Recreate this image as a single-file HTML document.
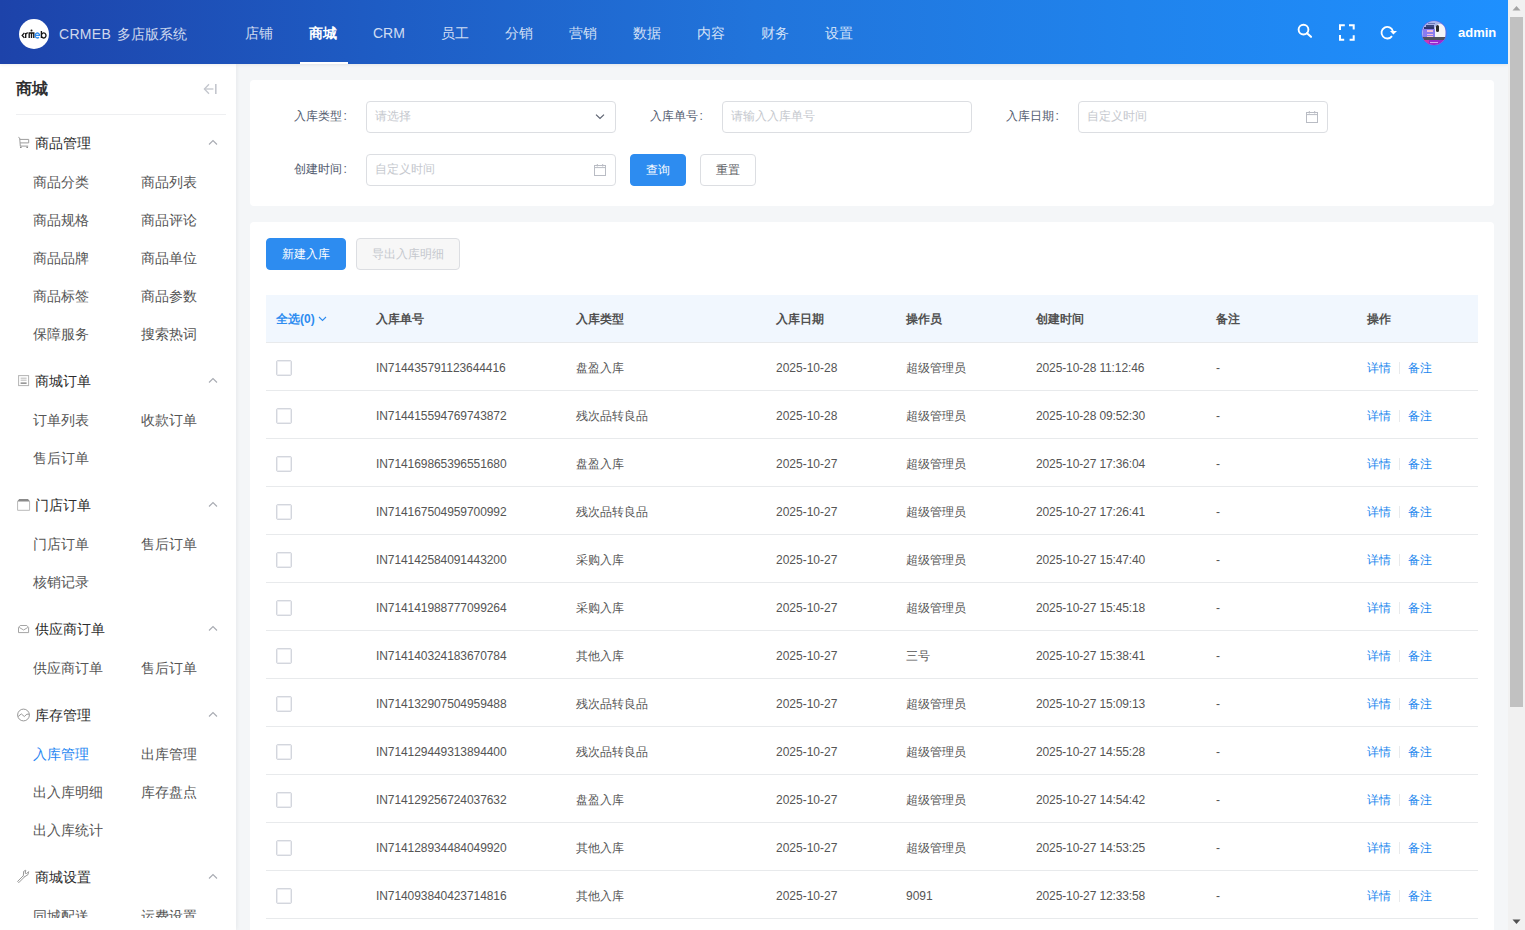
<!DOCTYPE html><html><head><meta charset="utf-8"><style>
*{box-sizing:border-box;margin:0;padding:0}
html,body{width:1525px;height:930px;overflow:hidden;background:#f4f6f8;font-family:"Liberation Sans",sans-serif;}
.a{position:absolute;white-space:nowrap}
#hdr{position:absolute;left:0;top:0;width:1508px;height:64px;background:linear-gradient(90deg,#1d43aa 0%,#1e5cc4 25%,#2174db 50%,#2083ec 75%,#1e90ff 100%);z-index:3;box-shadow:0 1px 3px rgba(0,21,41,.08)}
.logo{position:absolute;left:19px;top:19px;width:30px;height:30px;border-radius:50%;background:#fff;}
.brand{left:59px;top:25px;font-size:14px;line-height:18px;color:rgba(255,255,255,.8)}
.nav{top:24px;font-size:14px;line-height:18px;color:rgba(255,255,255,.8)}
.nav.on{color:#fff;font-weight:bold}
.uline{position:absolute;left:300px;top:62px;width:48px;height:2px;background:#fff}
#side{position:absolute;left:0;top:64px;width:236px;height:866px;background:#fff;box-shadow:1px 0 4px rgba(0,21,41,.06);z-index:2}
#menu{position:absolute;left:0;top:0;width:236px;height:854px;overflow:hidden}
.st{left:16px;top:15px;font-size:16px;line-height:20px;font-weight:bold;color:#303133}
.div{position:absolute;left:16px;top:50px;width:210px;height:1px;background:#eeeff1}
.gt{font-size:14px;line-height:18px;color:#2b2b2b}
.it{font-size:14px;line-height:18px;color:#555}
.it.on{color:#1f87f2}
.card{position:absolute;background:#fff;border-radius:4px}
.lbl{font-size:12px;line-height:16px;color:#515a6e}
.inp{position:absolute;height:32px;border:1px solid #dcdee2;border-radius:4px;background:#fff}
.ph{font-size:12px;line-height:16px;color:#c5c8ce}
.btn{position:absolute;height:32px;border-radius:4px;font-size:12px;text-align:center;line-height:30px}
.th{font-size:12px;line-height:16px;color:#505050;font-weight:bold}
.td{font-size:12px;line-height:16px;color:#555}
.lk{font-size:12px;line-height:16px;color:#2086ee}
.cb{position:absolute;width:16px;height:16px;border:1px solid #d3d6dd;border-radius:2px;background:#fff;box-shadow:inset 0 0 0 1px rgba(220,223,230,.55)}
.hl{position:absolute;height:1px;background:#e8eaec}
svg{overflow:visible}
</style></head><body>
<div id="hdr">
<div class="logo"><svg width="30" height="30" viewBox="0 0 30 30" style="position:absolute;left:0;top:0"><g fill="none" stroke="#151515" stroke-width="1.35"><path d="M5.4 13.9 L3.2 16.4 L5.4 18.9"/><path d="M6.7 19 V14 M6.7 15.4 Q7.3 13.9 8.9 13.9"/><path d="M10.2 19 V14 H14.8 V19 M12.5 14 V19"/><path d="M22.4 12 V19 M22.4 16.4 A2.3 2.5 0 1 1 22.4 16.5"/></g><circle cx="12.5" cy="11.6" r="1" fill="#151515"/><path d="M16.1 16.3 H20.6 A2.25 2.5 0 1 0 19.9 18.3" fill="none" stroke="#2d8cf0" stroke-width="1.35"/></svg></div>
<div class="a brand"><span style="letter-spacing:0.3px">CRMEB</span><span style="display:inline-block;width:6px"></span>多店版系统</div>
<div class="a nav" style="left:245px">店铺</div>
<div class="a nav on" style="left:309px">商城</div>
<div class="a nav" style="left:373px">CRM</div>
<div class="a nav" style="left:441px">员工</div>
<div class="a nav" style="left:505px">分销</div>
<div class="a nav" style="left:569px">营销</div>
<div class="a nav" style="left:633px">数据</div>
<div class="a nav" style="left:697px">内容</div>
<div class="a nav" style="left:761px">财务</div>
<div class="a nav" style="left:825px">设置</div>
<div class="uline"></div>
<svg width="20" height="20" viewBox="0 0 20 20" style="position:absolute;left:1294px;top:20px"><circle cx="9.5" cy="9.6" r="4.9" fill="none" stroke="#fff" stroke-width="1.9"/><path d="M13 13.2 L17 16.8" stroke="#fff" stroke-width="2.1" stroke-linecap="round"/></svg>
<svg width="20" height="20" viewBox="0 0 20 20" style="position:absolute;left:1337px;top:22px"><g fill="none" stroke="#fff" stroke-width="2"><path d="M3 8 V3.3 H7.8"/><path d="M12 3.3 H16.7 V7.5"/><path d="M3 13 V17.7 H7.2"/><path d="M12.6 17.7 H16.7 V13.2"/></g></svg>
<svg width="20" height="20" viewBox="0 0 20 20" style="position:absolute;left:1377px;top:22px"><path d="M15.9 9.2 A5.8 5.8 0 1 0 15.0 14.1" fill="none" stroke="#fff" stroke-width="1.8"/><path d="M13.0 9.0 L20.0 9.0 L16.4 12.6 Z" fill="#fff"/></svg>
<div class="a" style="left:1422px;top:21px;width:24px;height:24px;border-radius:50%;overflow:hidden;background:#aab6ea;box-shadow:0 0 0 0.6px rgba(160,60,220,.5)"><div class="a" style="left:6px;top:1.5px;width:7px;height:1px;background:#6c78b8"></div><div class="a" style="left:4px;top:4.3px;width:8px;height:1.3px;background:#3a4580"></div><div class="a" style="left:2px;top:6.2px;width:10px;height:1.8px;background:#2e3670"></div><div class="a" style="left:1px;top:8.2px;width:12px;height:8.5px;background:#8a7cf0"></div><div class="a" style="left:4.5px;top:9.4px;width:6px;height:1.4px;background:#f2bcd8"></div><div class="a" style="left:4.5px;top:12.5px;width:6px;height:1.4px;background:#f2bcd8"></div><div class="a" style="left:4.5px;top:15.1px;width:6px;height:1.4px;background:#f2bcd8"></div><div class="a" style="left:12.5px;top:3px;width:10px;height:13.5px;border-radius:5px 5px 0 0;background:#f4f4f7"></div><div class="a" style="left:13.6px;top:4px;width:3.8px;height:6.5px;border-radius:2px;background:#2a2a2a"></div><div class="a" style="left:0;top:16.3px;width:24px;height:2.4px;background:#50505c"></div><div class="a" style="left:0;top:18.7px;width:24px;height:6px;background:#9a28d0"></div><div class="a" style="left:0;top:18.7px;width:7px;height:6px;background:#cc38b0"></div><div class="a" style="left:8px;top:21px;width:8px;height:1.2px;background:#d9a6f0"></div></div>
<div class="a" style="left:1458px;top:24px;font-size:13px;line-height:18px;color:#fff;font-weight:bold">admin</div>
</div>
<div id="side"><div id="menu">
<div class="a st">商城</div>
<svg width="16" height="14" viewBox="0 0 16 14" style="position:absolute;left:203px;top:19px"><g fill="none" stroke="#c3c6cd" stroke-width="1.3"><path d="M1.5 6 H10.4"/><path d="M6 1.2 L1.4 6 L6 10.8"/></g><rect x="12" y="1" width="1.6" height="10" fill="#c3c6cd"/></svg>
<div class="div"></div>
<div class="a gt" style="left:35px;top:70px">商品管理</div>
<svg width="14" height="14" viewBox="0 0 14 14" style="position:absolute;left:18px;top:73px"><g fill="none" stroke="#9d9d9d" stroke-width="1"><path d="M0.4 0.3 L1.7 1.0 L2.3 9.2"/><path d="M1.8 2.4 H10.7 V5.9 H2.1"/><path d="M2.3 9.1 H10.2"/></g><g fill="#8a8a8a"><rect x="2" y="9.7" width="1.6" height="1.3"/><rect x="8.4" y="9.7" width="1.6" height="1.3"/></g></svg>
<svg width="10" height="7" viewBox="0 0 10 7" style="position:absolute;left:208px;top:75px"><path d="M1 5.5 L5 1.5 L9 5.5" fill="none" stroke="#a8abb2" stroke-width="1.1"/></svg>
<div class="a it" style="left:33px;top:109px">商品分类</div>
<div class="a it" style="left:141px;top:109px">商品列表</div>
<div class="a it" style="left:33px;top:147px">商品规格</div>
<div class="a it" style="left:141px;top:147px">商品评论</div>
<div class="a it" style="left:33px;top:185px">商品品牌</div>
<div class="a it" style="left:141px;top:185px">商品单位</div>
<div class="a it" style="left:33px;top:223px">商品标签</div>
<div class="a it" style="left:141px;top:223px">商品参数</div>
<div class="a it" style="left:33px;top:261px">保障服务</div>
<div class="a it" style="left:141px;top:261px">搜索热词</div>
<div class="a gt" style="left:35px;top:308px">商城订单</div>
<svg width="12" height="12" viewBox="0 0 12 12" style="position:absolute;left:18px;top:311px"><rect x="0.6" y="0.6" width="10" height="10" fill="none" stroke="#b4b4b4" stroke-width="1"/><g fill="#b0b0b0"><rect x="2.6" y="2.7" width="6" height="0.9"/><rect x="2.6" y="4.7" width="6" height="0.9"/></g><rect x="2.6" y="7.6" width="6" height="1" fill="#555"/></svg>
<svg width="10" height="7" viewBox="0 0 10 7" style="position:absolute;left:208px;top:313px"><path d="M1 5.5 L5 1.5 L9 5.5" fill="none" stroke="#a8abb2" stroke-width="1.1"/></svg>
<div class="a it" style="left:33px;top:347px">订单列表</div>
<div class="a it" style="left:141px;top:347px">收款订单</div>
<div class="a it" style="left:33px;top:385px">售后订单</div>
<div class="a gt" style="left:35px;top:432px">门店订单</div>
<svg width="14" height="13" viewBox="0 0 14 13" style="position:absolute;left:17px;top:435px"><path d="M0.6 2.5 V11.3 H12.6 V2.5" fill="none" stroke="#b9b9b9" stroke-width="1"/><path d="M2.2 0 H11 L13.1 2.6 H0.1 Z" fill="#8a8a8a"/></svg>
<svg width="10" height="7" viewBox="0 0 10 7" style="position:absolute;left:208px;top:437px"><path d="M1 5.5 L5 1.5 L9 5.5" fill="none" stroke="#a8abb2" stroke-width="1.1"/></svg>
<div class="a it" style="left:33px;top:471px">门店订单</div>
<div class="a it" style="left:141px;top:471px">售后订单</div>
<div class="a it" style="left:33px;top:509px">核销记录</div>
<div class="a gt" style="left:35px;top:556px">供应商订单</div>
<svg width="13" height="10" viewBox="0 0 13 10" style="position:absolute;left:18px;top:561px"><g fill="none" stroke="#a5a5a5" stroke-width="1"><path d="M2.2 0.5 H8.8 L10.6 2.4 V7.6 H0.5 V2.4 Z"/><path d="M1.2 2.4 L5.6 5.0 L9.9 2.4"/></g></svg>
<svg width="10" height="7" viewBox="0 0 10 7" style="position:absolute;left:208px;top:561px"><path d="M1 5.5 L5 1.5 L9 5.5" fill="none" stroke="#a8abb2" stroke-width="1.1"/></svg>
<div class="a it" style="left:33px;top:595px">供应商订单</div>
<div class="a it" style="left:141px;top:595px">售后订单</div>
<div class="a gt" style="left:35px;top:642px">库存管理</div>
<svg width="16" height="16" viewBox="0 0 16 16" style="position:absolute;left:16px;top:643px"><g fill="none" stroke="#999" stroke-width="1"><circle cx="7.5" cy="8" r="5.9"/><path d="M2.2 9.5 L5.3 6.9 L8.3 9.5 L10.9 7.2 L13.2 7.2"/></g></svg>
<svg width="10" height="7" viewBox="0 0 10 7" style="position:absolute;left:208px;top:647px"><path d="M1 5.5 L5 1.5 L9 5.5" fill="none" stroke="#a8abb2" stroke-width="1.1"/></svg>
<div class="a it on" style="left:33px;top:681px">入库管理</div>
<div class="a it" style="left:141px;top:681px">出库管理</div>
<div class="a it" style="left:33px;top:719px">出入库明细</div>
<div class="a it" style="left:141px;top:719px">库存盘点</div>
<div class="a it" style="left:33px;top:757px">出入库统计</div>
<div class="a gt" style="left:35px;top:804px">商城设置</div>
<svg width="16" height="16" viewBox="0 0 16 16" style="position:absolute;left:16px;top:804px"><g fill="none" stroke="#9a9a9a" stroke-width="1" stroke-linejoin="round"><path d="M1.6 13.4 L2.8 14.6 L8.6 8.8 L7.4 7.6 Z"/><path d="M7.4 7.6 L7.6 3.4 L9.8 2.2 L9.2 5.3 L10.6 5.6 L12.6 3.6 L12 6.6 L8.6 8.8"/></g></svg>
<svg width="10" height="7" viewBox="0 0 10 7" style="position:absolute;left:208px;top:809px"><path d="M1 5.5 L5 1.5 L9 5.5" fill="none" stroke="#a8abb2" stroke-width="1.1"/></svg>
<div class="a it" style="left:33px;top:843px">同城配送</div>
<div class="a it" style="left:141px;top:843px">运费设置</div>
</div></div>
<div class="card" style="left:250px;top:80px;width:1244px;height:126px"></div>
<div class="card" style="left:250px;top:222px;width:1244px;height:708px;border-radius:4px 4px 0 0"></div>
<div class="a lbl" style="left:294px;top:108px">入库类型<span style="margin-left:1.5px">:</span></div>
<div class="inp" style="left:366px;top:101px;width:250px"></div>
<div class="a ph" style="left:375px;top:108px">请选择</div>
<svg width="12" height="8" viewBox="0 0 12 8" style="position:absolute;left:594px;top:113px"><path d="M2 1.6 L6 5.5 L10 1.6" fill="none" stroke="#5c6270" stroke-width="1.2"/></svg>
<div class="a lbl" style="left:650px;top:108px">入库单号<span style="margin-left:1.5px">:</span></div>
<div class="inp" style="left:722px;top:101px;width:250px"></div>
<div class="a ph" style="left:731px;top:108px">请输入入库单号</div>
<div class="a lbl" style="left:1006px;top:108px">入库日期<span style="margin-left:1.5px">:</span></div>
<div class="inp" style="left:1078px;top:101px;width:250px"></div>
<div class="a ph" style="left:1087px;top:108px">自定义时间</div>
<svg width="14" height="14" viewBox="0 0 14 14" style="position:absolute;left:1305px;top:110px"><g fill="none" stroke="#b9bcc4" stroke-width="1"><rect x="1.5" y="2.5" width="11" height="10"/><path d="M1.5 4.6 H12.5"/><path d="M4.3 1 V3.5 M9.7 1 V3.5"/></g></svg>
<div class="a lbl" style="left:294px;top:161px">创建时间<span style="margin-left:1.5px">:</span></div>
<div class="inp" style="left:366px;top:154px;width:250px"></div>
<div class="a ph" style="left:375px;top:161px">自定义时间</div>
<svg width="14" height="14" viewBox="0 0 14 14" style="position:absolute;left:593px;top:163px"><g fill="none" stroke="#b9bcc4" stroke-width="1"><rect x="1.5" y="2.5" width="11" height="10"/><path d="M1.5 4.6 H12.5"/><path d="M4.3 1 V3.5 M9.7 1 V3.5"/></g></svg>
<div class="btn" style="left:630px;top:154px;width:56px;background:#2d8cf0;color:#fff;border:1px solid #2d8cf0">查询</div>
<div class="btn" style="left:700px;top:154px;width:56px;background:#fff;color:#606266;border:1px solid #dcdee2">重置</div>
<div class="btn" style="left:266px;top:238px;width:80px;background:#2d8cf0;color:#fff;border:1px solid #2d8cf0">新建入库</div>
<div class="btn" style="left:356px;top:238px;width:104px;background:#f7f7f7;color:#c5c8ce;border:1px solid #dcdee2">导出入库明细</div>
<div class="a" style="left:266px;top:295px;width:1212px;height:47px;background:#f1f7fe"></div>
<div class="a th" style="left:276px;top:311px;color:#2d8cf0;font-weight:bold">全选(0)</div>
<svg width="9" height="6" viewBox="0 0 9 6" style="position:absolute;left:318px;top:316px"><path d="M1 1 L4.5 4.5 L8 1" fill="none" stroke="#2d8cf0" stroke-width="1.1"/></svg>
<div class="a th" style="left:376px;top:311px">入库单号</div>
<div class="a th" style="left:576px;top:311px">入库类型</div>
<div class="a th" style="left:776px;top:311px">入库日期</div>
<div class="a th" style="left:906px;top:311px">操作员</div>
<div class="a th" style="left:1036px;top:311px">创建时间</div>
<div class="a th" style="left:1216px;top:311px">备注</div>
<div class="a th" style="left:1367px;top:311px">操作</div>
<div class="hl" style="left:266px;top:342px;width:1212px"></div>
<div class="cb" style="left:276px;top:360px"></div>
<div class="a td" style="left:376px;top:360px;letter-spacing:-0.08px">IN714435791123644416</div>
<div class="a td" style="left:576px;top:360px">盘盈入库</div>
<div class="a td" style="left:776px;top:360px">2025-10-28</div>
<div class="a td" style="left:906px;top:360px">超级管理员</div>
<div class="a td" style="left:1036px;top:360px;letter-spacing:-0.12px">2025-10-28 11:12:46</div>
<div class="a td" style="left:1216px;top:360px">-</div>
<div class="a lk" style="left:1367px;top:360px">详情</div>
<div class="a" style="left:1399px;top:362px;width:1px;height:12px;background:#e8eaec"></div>
<div class="a lk" style="left:1408px;top:360px">备注</div>
<div class="hl" style="left:266px;top:390px;width:1212px"></div>
<div class="cb" style="left:276px;top:408px"></div>
<div class="a td" style="left:376px;top:408px;letter-spacing:-0.08px">IN714415594769743872</div>
<div class="a td" style="left:576px;top:408px">残次品转良品</div>
<div class="a td" style="left:776px;top:408px">2025-10-28</div>
<div class="a td" style="left:906px;top:408px">超级管理员</div>
<div class="a td" style="left:1036px;top:408px;letter-spacing:-0.12px">2025-10-28 09:52:30</div>
<div class="a td" style="left:1216px;top:408px">-</div>
<div class="a lk" style="left:1367px;top:408px">详情</div>
<div class="a" style="left:1399px;top:410px;width:1px;height:12px;background:#e8eaec"></div>
<div class="a lk" style="left:1408px;top:408px">备注</div>
<div class="hl" style="left:266px;top:438px;width:1212px"></div>
<div class="cb" style="left:276px;top:456px"></div>
<div class="a td" style="left:376px;top:456px;letter-spacing:-0.08px">IN714169865396551680</div>
<div class="a td" style="left:576px;top:456px">盘盈入库</div>
<div class="a td" style="left:776px;top:456px">2025-10-27</div>
<div class="a td" style="left:906px;top:456px">超级管理员</div>
<div class="a td" style="left:1036px;top:456px;letter-spacing:-0.12px">2025-10-27 17:36:04</div>
<div class="a td" style="left:1216px;top:456px">-</div>
<div class="a lk" style="left:1367px;top:456px">详情</div>
<div class="a" style="left:1399px;top:458px;width:1px;height:12px;background:#e8eaec"></div>
<div class="a lk" style="left:1408px;top:456px">备注</div>
<div class="hl" style="left:266px;top:486px;width:1212px"></div>
<div class="cb" style="left:276px;top:504px"></div>
<div class="a td" style="left:376px;top:504px;letter-spacing:-0.08px">IN714167504959700992</div>
<div class="a td" style="left:576px;top:504px">残次品转良品</div>
<div class="a td" style="left:776px;top:504px">2025-10-27</div>
<div class="a td" style="left:906px;top:504px">超级管理员</div>
<div class="a td" style="left:1036px;top:504px;letter-spacing:-0.12px">2025-10-27 17:26:41</div>
<div class="a td" style="left:1216px;top:504px">-</div>
<div class="a lk" style="left:1367px;top:504px">详情</div>
<div class="a" style="left:1399px;top:506px;width:1px;height:12px;background:#e8eaec"></div>
<div class="a lk" style="left:1408px;top:504px">备注</div>
<div class="hl" style="left:266px;top:534px;width:1212px"></div>
<div class="cb" style="left:276px;top:552px"></div>
<div class="a td" style="left:376px;top:552px;letter-spacing:-0.08px">IN714142584091443200</div>
<div class="a td" style="left:576px;top:552px">采购入库</div>
<div class="a td" style="left:776px;top:552px">2025-10-27</div>
<div class="a td" style="left:906px;top:552px">超级管理员</div>
<div class="a td" style="left:1036px;top:552px;letter-spacing:-0.12px">2025-10-27 15:47:40</div>
<div class="a td" style="left:1216px;top:552px">-</div>
<div class="a lk" style="left:1367px;top:552px">详情</div>
<div class="a" style="left:1399px;top:554px;width:1px;height:12px;background:#e8eaec"></div>
<div class="a lk" style="left:1408px;top:552px">备注</div>
<div class="hl" style="left:266px;top:582px;width:1212px"></div>
<div class="cb" style="left:276px;top:600px"></div>
<div class="a td" style="left:376px;top:600px;letter-spacing:-0.08px">IN714141988777099264</div>
<div class="a td" style="left:576px;top:600px">采购入库</div>
<div class="a td" style="left:776px;top:600px">2025-10-27</div>
<div class="a td" style="left:906px;top:600px">超级管理员</div>
<div class="a td" style="left:1036px;top:600px;letter-spacing:-0.12px">2025-10-27 15:45:18</div>
<div class="a td" style="left:1216px;top:600px">-</div>
<div class="a lk" style="left:1367px;top:600px">详情</div>
<div class="a" style="left:1399px;top:602px;width:1px;height:12px;background:#e8eaec"></div>
<div class="a lk" style="left:1408px;top:600px">备注</div>
<div class="hl" style="left:266px;top:630px;width:1212px"></div>
<div class="cb" style="left:276px;top:648px"></div>
<div class="a td" style="left:376px;top:648px;letter-spacing:-0.08px">IN714140324183670784</div>
<div class="a td" style="left:576px;top:648px">其他入库</div>
<div class="a td" style="left:776px;top:648px">2025-10-27</div>
<div class="a td" style="left:906px;top:648px">三号</div>
<div class="a td" style="left:1036px;top:648px;letter-spacing:-0.12px">2025-10-27 15:38:41</div>
<div class="a td" style="left:1216px;top:648px">-</div>
<div class="a lk" style="left:1367px;top:648px">详情</div>
<div class="a" style="left:1399px;top:650px;width:1px;height:12px;background:#e8eaec"></div>
<div class="a lk" style="left:1408px;top:648px">备注</div>
<div class="hl" style="left:266px;top:678px;width:1212px"></div>
<div class="cb" style="left:276px;top:696px"></div>
<div class="a td" style="left:376px;top:696px;letter-spacing:-0.08px">IN714132907504959488</div>
<div class="a td" style="left:576px;top:696px">残次品转良品</div>
<div class="a td" style="left:776px;top:696px">2025-10-27</div>
<div class="a td" style="left:906px;top:696px">超级管理员</div>
<div class="a td" style="left:1036px;top:696px;letter-spacing:-0.12px">2025-10-27 15:09:13</div>
<div class="a td" style="left:1216px;top:696px">-</div>
<div class="a lk" style="left:1367px;top:696px">详情</div>
<div class="a" style="left:1399px;top:698px;width:1px;height:12px;background:#e8eaec"></div>
<div class="a lk" style="left:1408px;top:696px">备注</div>
<div class="hl" style="left:266px;top:726px;width:1212px"></div>
<div class="cb" style="left:276px;top:744px"></div>
<div class="a td" style="left:376px;top:744px;letter-spacing:-0.08px">IN714129449313894400</div>
<div class="a td" style="left:576px;top:744px">残次品转良品</div>
<div class="a td" style="left:776px;top:744px">2025-10-27</div>
<div class="a td" style="left:906px;top:744px">超级管理员</div>
<div class="a td" style="left:1036px;top:744px;letter-spacing:-0.12px">2025-10-27 14:55:28</div>
<div class="a td" style="left:1216px;top:744px">-</div>
<div class="a lk" style="left:1367px;top:744px">详情</div>
<div class="a" style="left:1399px;top:746px;width:1px;height:12px;background:#e8eaec"></div>
<div class="a lk" style="left:1408px;top:744px">备注</div>
<div class="hl" style="left:266px;top:774px;width:1212px"></div>
<div class="cb" style="left:276px;top:792px"></div>
<div class="a td" style="left:376px;top:792px;letter-spacing:-0.08px">IN714129256724037632</div>
<div class="a td" style="left:576px;top:792px">盘盈入库</div>
<div class="a td" style="left:776px;top:792px">2025-10-27</div>
<div class="a td" style="left:906px;top:792px">超级管理员</div>
<div class="a td" style="left:1036px;top:792px;letter-spacing:-0.12px">2025-10-27 14:54:42</div>
<div class="a td" style="left:1216px;top:792px">-</div>
<div class="a lk" style="left:1367px;top:792px">详情</div>
<div class="a" style="left:1399px;top:794px;width:1px;height:12px;background:#e8eaec"></div>
<div class="a lk" style="left:1408px;top:792px">备注</div>
<div class="hl" style="left:266px;top:822px;width:1212px"></div>
<div class="cb" style="left:276px;top:840px"></div>
<div class="a td" style="left:376px;top:840px;letter-spacing:-0.08px">IN714128934484049920</div>
<div class="a td" style="left:576px;top:840px">其他入库</div>
<div class="a td" style="left:776px;top:840px">2025-10-27</div>
<div class="a td" style="left:906px;top:840px">超级管理员</div>
<div class="a td" style="left:1036px;top:840px;letter-spacing:-0.12px">2025-10-27 14:53:25</div>
<div class="a td" style="left:1216px;top:840px">-</div>
<div class="a lk" style="left:1367px;top:840px">详情</div>
<div class="a" style="left:1399px;top:842px;width:1px;height:12px;background:#e8eaec"></div>
<div class="a lk" style="left:1408px;top:840px">备注</div>
<div class="hl" style="left:266px;top:870px;width:1212px"></div>
<div class="cb" style="left:276px;top:888px"></div>
<div class="a td" style="left:376px;top:888px;letter-spacing:-0.08px">IN714093840423714816</div>
<div class="a td" style="left:576px;top:888px">其他入库</div>
<div class="a td" style="left:776px;top:888px">2025-10-27</div>
<div class="a td" style="left:906px;top:888px">9091</div>
<div class="a td" style="left:1036px;top:888px;letter-spacing:-0.12px">2025-10-27 12:33:58</div>
<div class="a td" style="left:1216px;top:888px">-</div>
<div class="a lk" style="left:1367px;top:888px">详情</div>
<div class="a" style="left:1399px;top:890px;width:1px;height:12px;background:#e8eaec"></div>
<div class="a lk" style="left:1408px;top:888px">备注</div>
<div class="hl" style="left:266px;top:918px;width:1212px"></div>
<div class="a" style="left:1508px;top:0;width:17px;height:930px;background:#f1f1f1;z-index:5"></div>
<div class="a" style="left:1510px;top:17px;width:13px;height:690px;background:#c1c1c1;z-index:5"></div>
<svg width="17" height="17" viewBox="0 0 17 17" style="position:absolute;left:1508px;top:0;z-index:6"><path d="M4.5 10.5 L8.5 6 L12.5 10.5 Z" fill="#a3a3a3"/></svg>
<svg width="17" height="17" viewBox="0 0 17 17" style="position:absolute;left:1508px;top:913px;z-index:6"><path d="M4.5 6.5 L8.5 11 L12.5 6.5 Z" fill="#505050"/></svg>
</body></html>
